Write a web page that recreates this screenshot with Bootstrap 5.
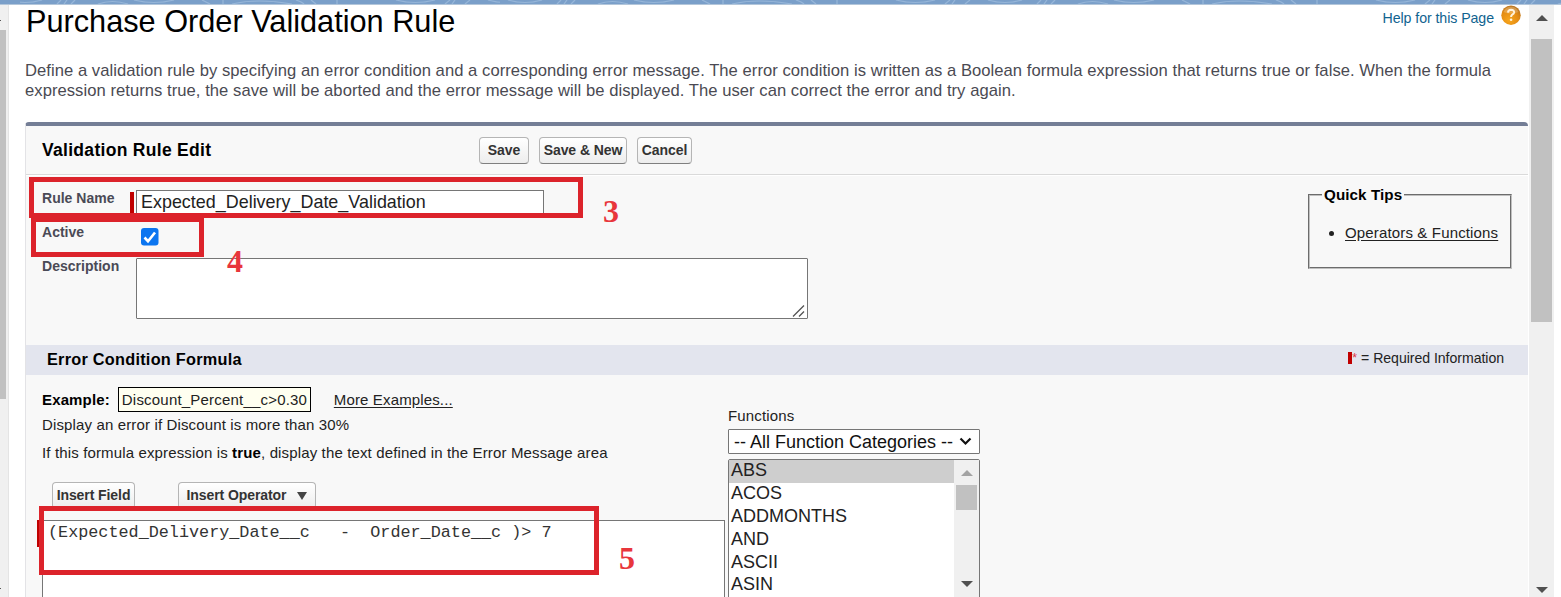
<!DOCTYPE html>
<html lang="en">
<head>
<meta charset="utf-8">
<meta name="viewport" content="width=device-width, initial-scale=1">
<title>Purchase Order Validation Rule</title>
<link href="https://cdn.jsdelivr.net/npm/bootstrap@5.3.0/dist/css/bootstrap.min.css" rel="stylesheet">
<style>
body{width:1561px;height:597px;overflow:hidden;background:#fff;color:#222;font-family:"Liberation Sans",Arial,sans-serif;font-size:15px;line-height:20px;letter-spacing:.14px}
svg{display:block;flex:none}
.topstrip{height:5px;background:#7a9fc9;border-bottom:1px solid #b3c6da;flex:none}
.workarea{height:592px}
.leftrail{width:9px;background:#f0f0f0;border-right:1px solid #e4e4e4;flex:none}
.leftthumb{width:6px;height:369px;background:#c1c1c1}
.mainpane{width:1520px;padding-left:16px;flex:none}
.rightbar{width:25px;background:#f0f0f0;flex:none}
.rightthumb{width:21px;height:283px;margin-top:18px;background:#c1c1c1}
.pagetitle{font-size:30.7px;line-height:34px;height:56px;color:#000;letter-spacing:0;padding-left:1px}
.helplink{color:#11638f;text-decoration:none;font-size:14.2px;line-height:26px;letter-spacing:-.07px}
.helpwrap{gap:7px;padding-right:8px}
.intro{font-size:16.6px;height:61px;color:#4a4a52;letter-spacing:.05px;white-space:nowrap}
.panel{width:1503px;height:475px;border-top:4px solid #747e96;border-left:1px solid #e3e3e6;border-radius:4px 4px 0 0;background:#f8f8f8}
.panelhead{height:49px;border-bottom:1px solid #dadada;box-shadow:0 1px #fff}
.headtitle{width:453px;padding-left:16px;font-size:17.5px;letter-spacing:.3px;color:#000;flex:none}
.sfbtn{height:27px;border:1px solid #b5b5b5;border-bottom-color:#7f7f7f;border-radius:4px;background:linear-gradient(#fff,#ededed);color:#333;font-weight:700;font-size:14px;line-height:25px;letter-spacing:-.08px;padding:0;white-space:nowrap}
.w-save{width:50px;margin-right:10px}
.w-savenew{width:88px;margin-right:10px}
.w-cancel{width:55px}
.w-field{width:83px;margin-right:43px}
.w-oper{width:138px;gap:11px}
.formarea{height:170px;padding-top:13px}
.formrow{height:34px}
.lab{width:104px;padding-left:16px;font-size:14px;letter-spacing:.02px;font-weight:700;color:#4a4a56;flex:none}
.reqbar{width:4px;background:#c00000;flex:none}
.rulefield{width:408px;height:25px;margin:2px 0 0 2px;border:1px solid #767676;background:#fff;font-size:17.9px;line-height:22px;letter-spacing:.02px;padding-left:4px}
.descfield{width:672px;height:61px;margin:2px 0 0 6px;border:1px solid #767676;border-radius:1px;background:#fff}
.tips{width:204px;height:84px;margin:-3px 16px 0 0;border:2px groove #c0c0c0;padding:0 0 0 12px}
.tips legend{float:none;width:auto;font-size:15.2px;line-height:20px;letter-spacing:.08px;font-weight:700;color:#000;padding:0 2px;margin:0}
.tips ul{margin:18px 0 0;padding-left:23px;line-height:20px;letter-spacing:.15px;white-space:nowrap}
.inklink{color:#222;text-decoration:underline;text-underline-offset:2px}
.band{height:30px;background:#e3e5ee;padding:0 24px 0 21px}
.bandtitle{font-size:16.3px;letter-spacing:.25px;color:#000;line-height:29px}
.reqnote{font-size:14.1px;letter-spacing:-.04px;line-height:26px}
.reqnote .reqbar{height:12px;margin-top:7px}
.formula{height:222px;overflow:hidden}
.formulaleft{width:702px;padding-top:12px;flex:none}
.indent{padding-left:16px}
.exampleline{height:25px;margin-bottom:3px}
.examplebox{width:193px;height:25px;border:1px solid #000;background:#fffff0;line-height:23px;padding-left:3px;margin:0 23px 0 8px;letter-spacing:.2px}
.tabrow{padding-left:26px;margin-top:19px;height:38px}
.codebox{padding-left:11px}
.code{width:683px;height:90px;margin-left:1px;border:1px solid #767676;background:#fff;font:16.8px/20px "Liberation Mono",monospace;letter-spacing:0;white-space:pre;padding:2px 0 0 5px;color:#333}
.codebox .reqbar{height:27px}
.functions{width:252px;padding-top:31px}
.fnsel{height:25px;margin-top:3px;border:1px solid #767676;border-radius:1px;background:#fff;color:#111;font-size:18px;line-height:22px;letter-spacing:0;padding:0 7px 0 5px}
.fnlist{height:150px;border:1px solid #767676;border-radius:2px;background:#fff;font-size:18px;letter-spacing:0;margin-top:5px}
.fnopt{height:22.9px;padding-left:2px;line-height:20px}
.fnopt.on{background:#cecece}
.fnbar{width:25px;background:#f0f0f0;padding-top:10px}
.fnthumb{width:21px;height:25px;margin:9px 0 71px;background:#c1c1c1}
.redbox{border:5px solid #dc232b}
.stepno{font:bold 32px/32px "Liberation Serif",serif;color:#e8363c;letter-spacing:0}
.box-name{left:29px;top:177px;width:554px;height:41px}
.box-active{left:31px;top:217px;width:173px;height:40px}
.box-formula{left:39px;top:506px;width:560px;height:69px}
.step-3{left:603px;top:195px}
.step-4{left:227px;top:245px}
.step-5{left:619px;top:542px}
</style>
</head>
<body class="d-flex flex-column position-relative">
<div class="topstrip overflow-hidden">
  <svg width="1561" height="4" fill="none" stroke="#96b6d9" stroke-width="1.2"><defs><pattern id="waves" width="480" height="4" patternUnits="userSpaceOnUse"><path d="M8 0Q25 5 42 0M57 4L61 0M64 4L67 0M71 4L75 0M98 4Q112-1 128 4M134 0Q154 5 174 0M202 0L210 4M223 0V4M232 4Q257-2 292 4M296 0Q302 2 304 4M311 0L316 4M337 0V4M396 0Q415 5 435 0M445 4L450 0M452 4L455 0M465 4L470 0"/></pattern></defs><rect width="480" height="4" x="20" fill="url(#waves)" stroke="none"/><rect width="1061" height="4" fill="url(#waves)" stroke="none" transform="translate(500)"/></svg>
</div>
<div class="workarea d-flex">
  <div class="leftrail d-flex flex-column">
    <svg width="6" height="25"><path d="M0 15h1v1H0z" fill="#555"/></svg>
    <div class="leftthumb"></div>
    <svg width="6" height="198"><path d="M0 189h1v1H0z" fill="#555"/></svg>
  </div>
  <main class="mainpane">
    <header class="d-flex justify-content-between">
      <h1 class="pagetitle fw-normal mb-0">Purchase Order Validation Rule</h1>
      <div class="helpwrap d-flex align-items-start">
        <a class="helplink" href="#">Help for this Page</a>
        <svg width="20" height="21" viewBox="0 0 20 21"><defs><radialGradient id="orb" cx=".4" cy=".75" r=".75"><stop offset="0" stop-color="#f8a61c"/><stop offset=".65" stop-color="#e38b13"/><stop offset="1" stop-color="#b9741f"/></radialGradient></defs><circle cx="10" cy="10.2" r="9.7" fill="url(#orb)"/><path d="M2.5 7A8 8 0 0 1 17.5 7Q10 10 2.500 7" fill="#fff" opacity=".22"/><path d="M7 7.600Q7.200 4.800 10.100 4.800Q13.200 4.900 13.100 7.400Q13 8.900 11.300 9.700Q10.100 10.400 10.100 12" fill="none" stroke="#fff3dc" stroke-width="2"/><circle cx="10.100" cy="14.700" r="1.300" fill="#fff3dc"/></svg>
      </div>
    </header>
    <p class="intro mb-0">Define a validation rule by specifying an error condition and a corresponding error message. The error condition is written as a Boolean formula expression that returns true or false. When the formula<br>expression returns true, the save will be aborted and the error message will be displayed. The user can correct the error and try again.</p>
    <section class="panel">
      <div class="panelhead d-flex align-items-center">
        <h2 class="headtitle fw-bold mb-0">Validation Rule Edit</h2>
        <button type="button" class="sfbtn w-save">Save</button>
        <button type="button" class="sfbtn w-savenew">Save &amp; New</button>
        <button type="button" class="sfbtn w-cancel">Cancel</button>
      </div>
      <div class="formarea d-flex justify-content-between align-items-start">
        <div>
          <div class="formrow d-flex align-items-start">
            <div class="lab">Rule Name</div>
            <div class="reqbar mt-1 h-75"></div>
            <div class="rulefield">Expected_Delivery_Date_Validation</div>
          </div>
          <div class="formrow d-flex align-items-start">
            <div class="lab">Active</div>
            <svg class="ms-2 mt-1" width="24" height="22"><rect x="3" y="2" width="17.500" height="17.500" rx="3" fill="#0b75f0"/><path d="M6.500 11.500l3.500 3.700 7-8.700" fill="none" stroke="#fff" stroke-width="2.600"/></svg>
          </div>
          <div class="formrow d-flex align-items-start">
            <div class="lab">Description</div>
            <div class="descfield d-flex justify-content-end align-items-end"><svg width="15" height="14"><path d="M1 12.500L12 1.500M7 12.500L12 7.500" stroke="#555" stroke-width="1.300"/></svg></div>
          </div>
        </div>
        <fieldset class="tips">
          <legend>Quick Tips</legend>
          <ul><li><a class="inklink" href="#">Operators &amp; Functions</a></li></ul>
        </fieldset>
      </div>
      <div class="band d-flex justify-content-between">
        <h3 class="bandtitle fw-bold mb-0">Error Condition Formula</h3>
        <div class="reqnote d-flex"><span class="reqbar"></span><span class="text-danger small me-1">*</span>= Required Information</div>
      </div>
      <div class="formula d-flex">
        <div class="formulaleft">
          <div class="exampleline indent d-flex align-items-center">
            <strong class="text-black">Example:</strong>
            <div class="examplebox">Discount_Percent__c&gt;0.30</div>
            <a class="inklink" href="#">More Examples...</a>
          </div>
          <div class="indent">Display an error if Discount is more than 30%</div>
          <div class="indent mt-2">If this formula expression is <strong class="text-black">true</strong>, display the text defined in the Error Message area</div>
          <div class="tabrow d-flex">
            <button type="button" class="sfbtn w-field">Insert Field</button>
            <button type="button" class="sfbtn w-oper d-flex align-items-center justify-content-center">Insert Operator <svg width="10" height="8"><path d="M0 0h10L5 8z" fill="#444"/></svg></button>
          </div>
          <div class="codebox d-flex align-items-start">
            <div class="reqbar"></div>
            <div class="code">(Expected_Delivery_Date__c   -  Order_Date__c )&gt; 7</div>
          </div>
        </div>
        <div class="functions">
          <div>Functions</div>
          <div class="fnsel d-flex justify-content-between align-items-center">-- All Function Categories --<svg width="13" height="9"><path d="M1.500 1.500l5 5 5-5" fill="none" stroke="#111" stroke-width="2.200"/></svg></div>
          <div class="fnlist d-flex">
            <div class="flex-fill">
              <div class="fnopt on">ABS</div>
              <div class="fnopt">ACOS</div>
              <div class="fnopt">ADDMONTHS</div>
              <div class="fnopt">AND</div>
              <div class="fnopt">ASCII</div>
              <div class="fnopt">ASIN</div>
            </div>
            <div class="fnbar d-flex flex-column align-items-center">
              <svg width="12" height="6"><path d="M0 6L6 0l6 6z" fill="#a3a3a3"/></svg>
              <div class="fnthumb"></div>
              <svg width="12" height="6"><path d="M0 0l6 6 6-6z" fill="#505050"/></svg>
            </div>
          </div>
        </div>
      </div>
    </section>
  </main>
  <div class="rightbar d-flex flex-column align-items-center">
    <svg class="mt-2" width="12" height="8"><path d="M0 8L6 2l6 6z" fill="#505050"/></svg>
    <div class="rightthumb"></div>
    <svg class="mt-auto mb-1" width="12" height="6"><path d="M0 0l6 6 6-6z" fill="#505050"/></svg>
  </div>
</div>
<div class="redbox box-name position-absolute"></div>
<div class="redbox box-active position-absolute"></div>
<div class="redbox box-formula position-absolute"></div>
<div class="stepno step-3 position-absolute">3</div>
<div class="stepno step-4 position-absolute">4</div>
<div class="stepno step-5 position-absolute">5</div>
<script src="https://cdn.jsdelivr.net/npm/bootstrap@5.3.0/dist/js/bootstrap.bundle.min.js"></script>
</body>
</html>
